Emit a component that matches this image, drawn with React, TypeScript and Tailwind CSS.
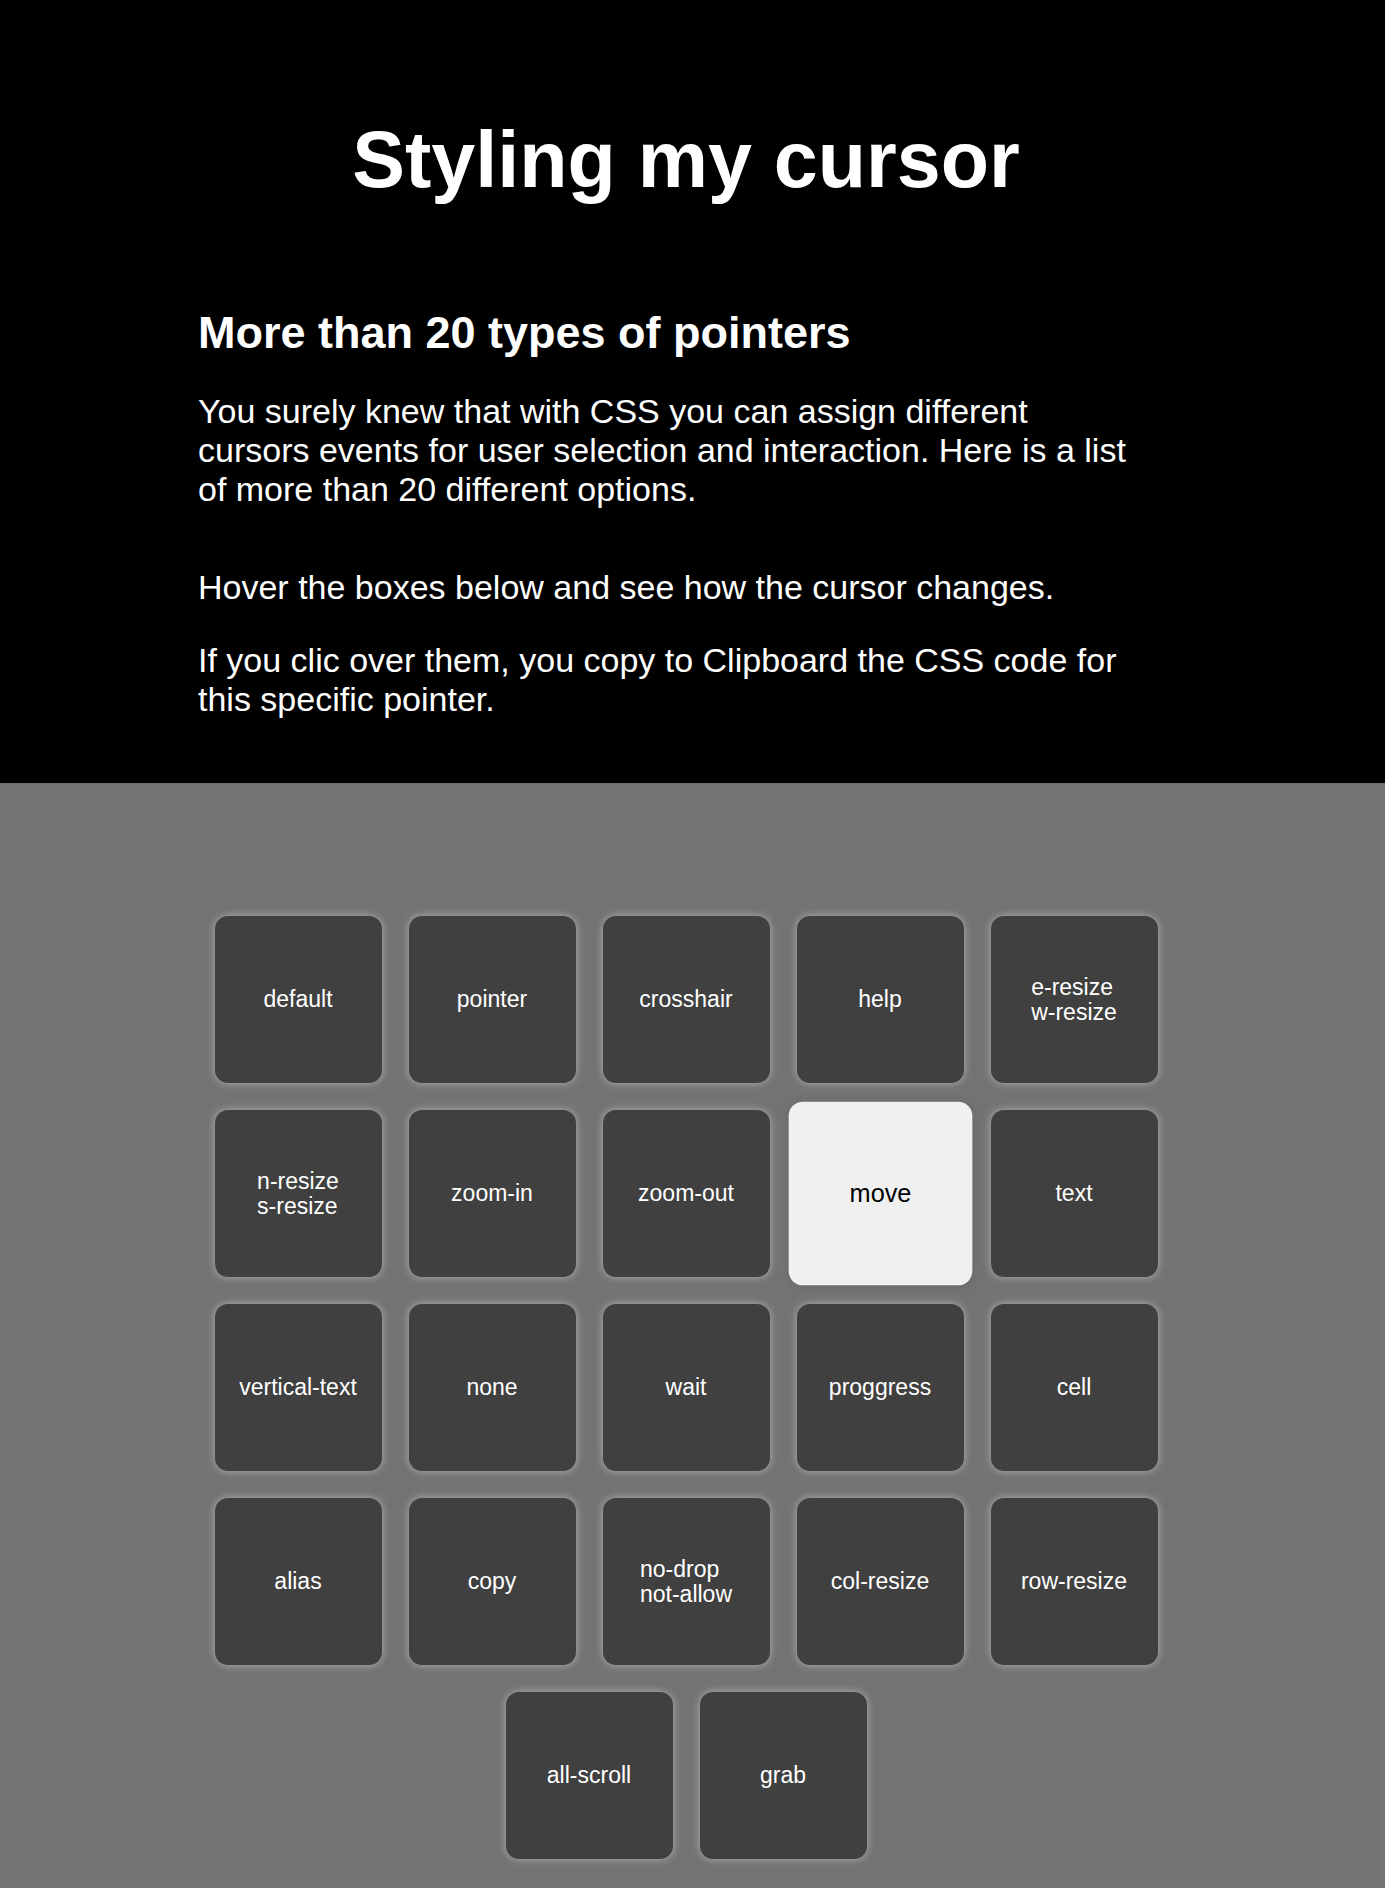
import { useState } from "react";

type Tile = { lines: string[]; cursor: string };

const tiles: Tile[] = [
  { lines: ["default"], cursor: "cursor-default" },
  { lines: ["pointer"], cursor: "cursor-pointer" },
  { lines: ["crosshair"], cursor: "cursor-crosshair" },
  { lines: ["help"], cursor: "cursor-help" },
  { lines: ["e-resize", "w-resize"], cursor: "cursor-e-resize" },
  { lines: ["n-resize", "s-resize"], cursor: "cursor-n-resize" },
  { lines: ["zoom-in"], cursor: "cursor-zoom-in" },
  { lines: ["zoom-out"], cursor: "cursor-zoom-out" },
  { lines: ["move"], cursor: "cursor-move" },
  { lines: ["text"], cursor: "cursor-text" },
  { lines: ["vertical-text"], cursor: "cursor-vertical-text" },
  { lines: ["none"], cursor: "cursor-none" },
  { lines: ["wait"], cursor: "cursor-wait" },
  { lines: ["proggress"], cursor: "cursor-progress" },
  { lines: ["cell"], cursor: "cursor-cell" },
  { lines: ["alias"], cursor: "cursor-alias" },
  { lines: ["copy"], cursor: "cursor-copy" },
  { lines: ["no-drop", "not-allow"], cursor: "cursor-no-drop" },
  { lines: ["col-resize"], cursor: "cursor-col-resize" },
  { lines: ["row-resize"], cursor: "cursor-row-resize" },
  { lines: ["all-scroll"], cursor: "cursor-all-scroll" },
  { lines: ["grab"], cursor: "cursor-grab" },
];

function CursorTile({ tile, active, onEnter }: { tile: Tile; active: boolean; onEnter: () => void }) {
  const look = active
    ? "scale-110 bg-[#f0f0f0] text-black shadow-[0_0_7px_rgba(0,0,0,0.1)]"
    : "bg-[#404040] text-white shadow-[0_0_8px_rgba(255,255,255,0.45)]";
  return (
    <button
      type="button"
      onMouseEnter={onEnter}
      onClick={() => navigator.clipboard?.writeText(tile.cursor.replace("cursor-", "cursor: ") + ";")}
      className={`flex size-[167px] items-center justify-center rounded-[13px] text-left text-[23px] leading-[25px] ${tile.cursor} ${look}`}
    >
      <span>
        {tile.lines.map((line) => (
          <span key={line} className="block">
            {line}
          </span>
        ))}
      </span>
    </button>
  );
}

export default function App() {
  const [active, setActive] = useState("move");
  return (
    <div className="flex min-h-screen flex-col bg-[#737373] font-['Liberation_Sans',Arial,sans-serif]">
      <header className="bg-black pt-[114px] pr-[13px] pb-16 text-white">
        <div className="mx-auto max-w-[976px]">
          <h1 className="text-center text-[79px] leading-[92px] font-bold">Styling my cursor</h1>
          <div className="pt-[101px] pr-8 text-[34px] leading-[39px]">
            <h2 className="text-[45px] leading-[51px] font-bold">More than 20 types of pointers</h2>
            <p className="mt-[34px]">
              You surely knew that with CSS you can assign different cursors events for user selection and
              interaction. Here is a list of more than 20 different options.
            </p>
            <p className="mt-[59px]">Hover the boxes below and see how the cursor changes.</p>
            <p className="mt-[34px]">
              If you clic over them, you copy to Clipboard the CSS code for this specific pointer.
            </p>
          </div>
        </div>
      </header>
      <main className="pt-[133px] pr-[13px] pb-[29px]">
        <div className="mx-auto flex max-w-[976px] flex-wrap justify-center gap-[27px]">
          {tiles.map((tile) => (
            <CursorTile
              key={tile.lines[0]}
              tile={tile}
              active={active === tile.lines[0]}
              onEnter={() => setActive(tile.lines[0])}
            />
          ))}
        </div>
      </main>
    </div>
  );
}
